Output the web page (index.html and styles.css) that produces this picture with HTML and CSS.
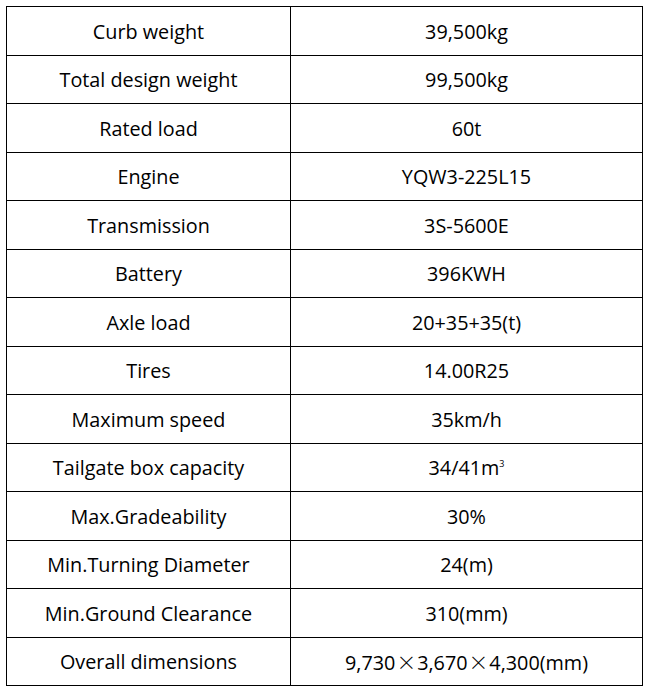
FILE: index.html
```html
<!DOCTYPE html>
<html>
<head>
<meta charset="utf-8">
<link rel="stylesheet" href="styles.css">
</head>
<body>
<div class="spec">
  <div class="row"><div class="cell">Curb weight</div><div class="cell">39,500kg</div></div>
  <div class="row"><div class="cell">Total design weight</div><div class="cell">99,500kg</div></div>
  <div class="row"><div class="cell">Rated load</div><div class="cell">60t</div></div>
  <div class="row"><div class="cell">Engine</div><div class="cell">YQW3-225L15</div></div>
  <div class="row"><div class="cell">Transmission</div><div class="cell">3S-5600E</div></div>
  <div class="row"><div class="cell">Battery</div><div class="cell">396KWH</div></div>
  <div class="row"><div class="cell">Axle load</div><div class="cell">20+35+35(t)</div></div>
  <div class="row"><div class="cell">Tires</div><div class="cell">14.00R25</div></div>
  <div class="row"><div class="cell">Maximum speed</div><div class="cell">35km/h</div></div>
  <div class="row"><div class="cell"><span>Tailgate box capacity</span></div><div class="cell"><span>34/41m<sup class="sup">3</sup></span></div></div>
  <div class="row"><div class="cell">Max.Gradeability</div><div class="cell">30%</div></div>
  <div class="row"><div class="cell">Min.Turning Diameter</div><div class="cell">24(m)</div></div>
  <div class="row"><div class="cell">Min.Ground Clearance</div><div class="cell">310(mm)</div></div>
  <div class="row"><div class="cell">Overall dimensions</div><div class="cell"><span>9,730<span class="times">×</span>3,670<span class="times">×</span>4,300(mm)</span></div></div>
</div>
</body>
</html>
```
FILE: styles.css
```css
html, body {
  margin: 0;
  padding: 0;
  background: #ffffff;
}
body {
  padding: 6px 0 0 6px;
  font-family: "Open Sans", sans-serif;
  font-size: 19.8px;
  color: #000000;
}
.spec {
  width: 637px;
  height: 680px;
  box-sizing: border-box;
  border-top: 1px solid #000;
  border-left: 1px solid #000;
  display: flex;
  flex-direction: column;
}
.row {
  flex: 1;
  display: grid;
  grid-template-columns: 284px 352px;
  min-height: 0;
}
.cell {
  display: flex;
  align-items: center;
  justify-content: center;
  border-right: 1px solid #000;
  border-bottom: 1px solid #000;
  padding-top: 1px;
}
.sup {
  font-size: 9px;
  line-height: 0;
  vertical-align: 8px;
}
.times {
  font-family: "Noto Sans CJK SC", sans-serif;
  font-weight: 300;
  margin: 0 1px;
}
```
